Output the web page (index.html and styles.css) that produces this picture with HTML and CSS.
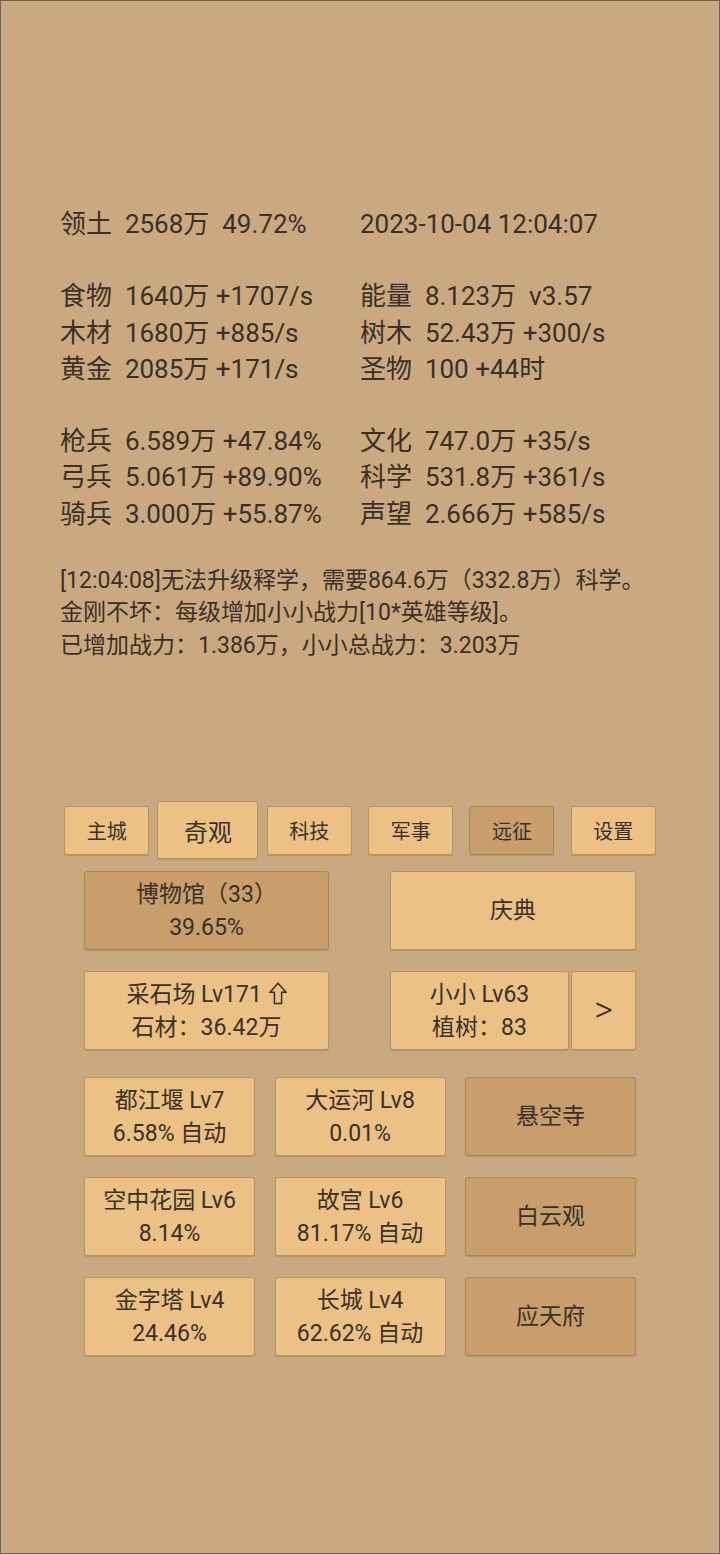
FILE: index.html
```html
<!DOCTYPE html>
<html lang="zh-CN">
<head>
<meta charset="utf-8">
<title>奇观</title>
<link rel="stylesheet" href="styles.css">
</head>
<body>
<div class="screen">
  <section class="stats">
    <div class="group">
      <p>领土  2568万  49.72%</p><p>2023-10-04 12:04:07</p>
    </div>
    <div class="group">
      <p>食物  1640万 +1707/s</p><p>能量  8.123万  v3.57</p>
      <p>木材  1680万 +885/s</p><p>树木  52.43万 +300/s</p>
      <p>黄金  2085万 +171/s</p><p>圣物  100 +44时</p>
    </div>
    <div class="group">
      <p>枪兵  6.589万 +47.84%</p><p>文化  747.0万 +35/s</p>
      <p>弓兵  5.061万 +89.90%</p><p>科学  531.8万 +361/s</p>
      <p>骑兵  3.000万 +55.87%</p><p>声望  2.666万 +585/s</p>
    </div>
  </section>

  <section class="log">
    <p>[12:04:08]无法升级释学，需要864.6万（332.8万）科学。</p>
    <p>金刚不坏：每级增加小小战力[10*英雄等级]。</p>
    <p>已增加战力：1.386万，小小总战力：3.203万</p>
  </section>

  <nav class="tabs">
    <div class="cell"><button class="tab">主城</button></div>
    <div class="cell"><button class="tab active">奇观</button></div>
    <div class="cell"><button class="tab">科技</button></div>
    <div class="cell"><button class="tab">军事</button></div>
    <div class="cell"><button class="tab dark">远征</button></div>
    <div class="cell"><button class="tab">设置</button></div>
  </nav>

  <section class="panel">
    <div class="pair first">
      <button class="btn dark">博物馆（33）<br>39.65%</button>
      <button class="btn">庆典</button>
    </div>
    <div class="pair">
      <button class="btn">采石场 Lv171 <svg class="up" width="18" height="23" viewBox="0 0 18 23"><path d="M9 1.2 L17 10.2 H12.6 V21.6 H5.4 V10.2 H1 Z" fill="none" stroke="#3b3026" stroke-width="1.5" stroke-linejoin="miter"/></svg><br>石材：36.42万</button>
      <div class="split">
        <button class="btn">小小 Lv63<br>植树：83</button>
        <button class="btn next">&gt;</button>
      </div>
    </div>
    <div class="triple first3">
      <button class="btn">都江堰 Lv7<br>6.58% 自动</button>
      <button class="btn">大运河 Lv8<br>0.01%</button>
      <button class="btn dark">悬空寺</button>
    </div>
    <div class="triple">
      <button class="btn">空中花园 Lv6<br>8.14%</button>
      <button class="btn">故宫 Lv6<br>81.17% 自动</button>
      <button class="btn dark">白云观</button>
    </div>
    <div class="triple">
      <button class="btn">金字塔 Lv4<br>24.46%</button>
      <button class="btn">长城 Lv4<br>62.62% 自动</button>
      <button class="btn dark">应天府</button>
    </div>
  </section>
</div>
</body>
</html>
```

FILE: styles.css
```css
* {
  box-sizing: border-box;
}

html, body {
  margin: 0;
  padding: 0;
  background: #caa981;
}

body {
  font-family: Roboto, "Noto Sans CJK SC", sans-serif;
  color: #3b3026;
}

.screen {
  width: 720px;
  height: 1554px;
  border: 1px solid #6b6358;
  box-shadow: inset 0 1px 0 #d6a877;
  background: #caa981;
  padding-top: 205px;
  overflow: hidden;
}

p {
  margin: 0;
  white-space: pre;
}

.stats {
  padding-left: 59px;
  font-size: 26px;
  line-height: 36.2px;
}

.group {
  display: grid;
  grid-template-columns: 300px 1fr;
}

.group + .group {
  margin-top: 36.2px;
}

.log {
  margin-top: 33px;
  padding-left: 59px;
  font-size: 23px;
  line-height: 32.5px;
}

.tabs {
  margin-top: 139px;
  margin-left: 55px;
  width: 608px;
  height: 58px;
  display: grid;
  grid-template-columns: repeat(6, 1fr);
  align-items: center;
  justify-items: center;
}

button {
  font-family: Roboto, "Noto Sans CJK SC", sans-serif;
  color: #3b3026;
  margin: 0;
  padding: 0;
  background: #ebc186;
  border: 1px solid #b8925f;
  border-radius: 3px;
  box-shadow: 0 1px 1px rgba(120, 85, 40, 0.25);
}

.cell {
  display: flex;
  align-items: center;
  justify-content: center;
}

.tab {
  width: 85px;
  height: 49px;
  font-size: 20px;
}

.tab.active {
  width: 101px;
  height: 58px;
  font-size: 24px;
}

.dark {
  background: #c89e6d;
  border-color: #a9865a;
}

.panel {
  margin-top: 12px;
  margin-left: 83px;
  width: 552px;
}

.pair {
  display: grid;
  grid-template-columns: 245px 246px;
  justify-content: space-between;
  margin-top: 21px;
}

.pair.first {
  margin-top: 0;
}

.triple {
  display: grid;
  grid-template-columns: repeat(3, 171px);
  justify-content: space-between;
  margin-top: 21px;
}

.triple.first3 {
  margin-top: 27px;
}

.btn {
  height: 79px;
  font-size: 23px;
  line-height: 33px;
  text-align: center;
}

.split {
  display: grid;
  grid-template-columns: 179px 65px;
  justify-content: space-between;
}

.next {
  font-size: 36px;
  font-weight: 300;
}

.up {
  vertical-align: -3px;
  margin-left: 1px;
}
```
